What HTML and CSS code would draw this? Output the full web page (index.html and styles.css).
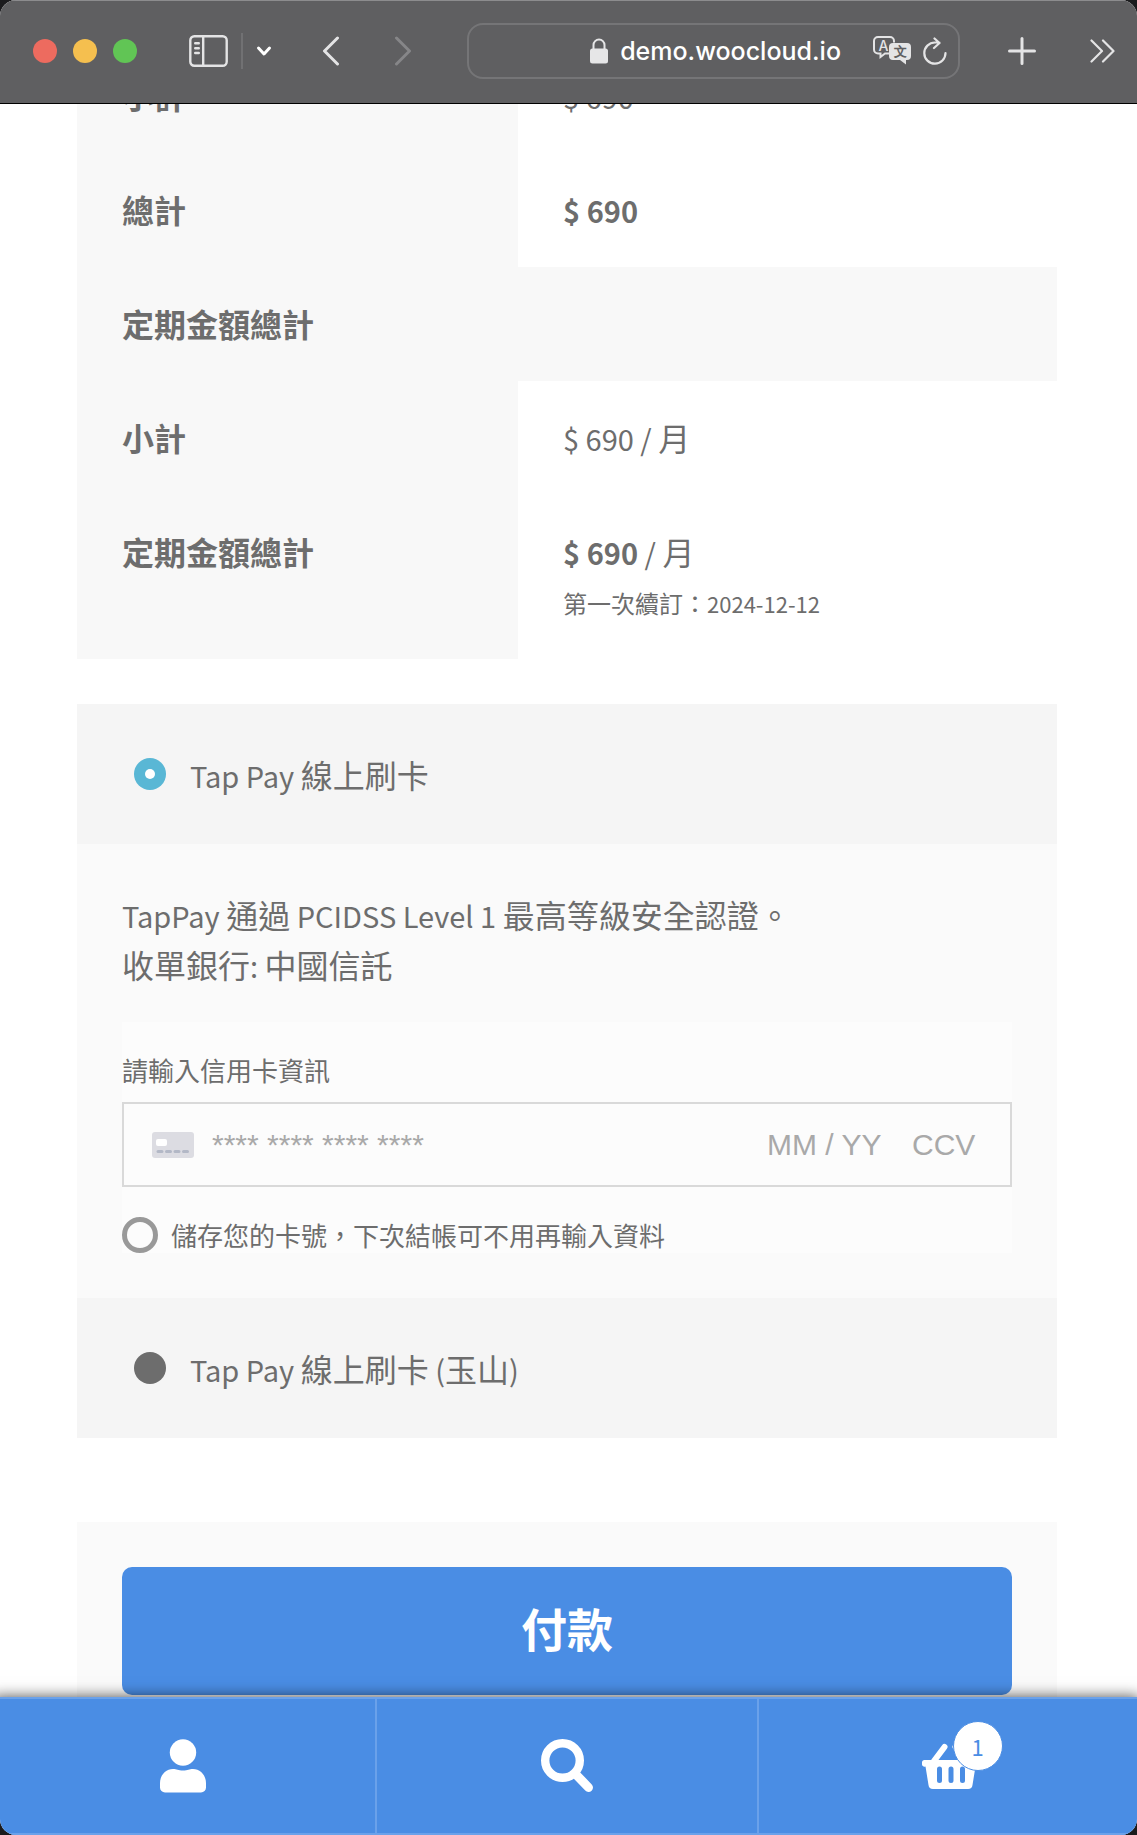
FILE: index.html
```html
<!DOCTYPE html>
<html lang="zh-Hant">
<head>
<meta charset="utf-8">
<meta name="viewport" content="width=device-width, initial-scale=1">
<title>結帳</title>
<link rel="stylesheet" href="styles.css">
</head>
<body>
<div class="window">
  <header class="toolbar">
    <div class="lights">
      <span class="light light-close"></span>
      <span class="light light-min"></span>
      <span class="light light-max"></span>
    </div>
    <div class="sidebar-tools">
      <button class="tool" type="button" aria-label="側邊欄">
        <svg width="39" height="32" viewBox="0 0 39 32" fill="none" stroke="#e4e4e5" stroke-width="2.4" stroke-linecap="round"><rect x="1.3" y="1.3" width="36.4" height="29.4" rx="4"/><path d="M14.2 1.5v29M6.2 8.3h3.6M6.2 13.2h3.6M6.2 18h3.6"/></svg>
      </button>
      <span class="divider"></span>
      <button class="tool" type="button" aria-label="標籤頁群組">
        <svg width="16" height="12" viewBox="0 0 16 12" fill="none" stroke="#fff" stroke-width="3" stroke-linecap="round" stroke-linejoin="round"><path d="M2.5 3l5.5 6 5.500-6"/></svg>
      </button>
    </div>
    <div class="history-tools">
      <button class="tool" type="button" aria-label="上一頁">
        <svg width="18" height="30" viewBox="0 0 18 30" fill="none" stroke="#e4e4e5" stroke-width="3" stroke-linecap="round" stroke-linejoin="round"><path d="M15.500 2L2.500 15l13 13"/></svg>
      </button>
      <button class="tool" type="button" aria-label="下一頁">
        <svg width="18" height="30" viewBox="0 0 18 30" fill="none" stroke="#868688" stroke-width="3" stroke-linecap="round" stroke-linejoin="round"><path d="M2.500 2l13 13-13 13"/></svg>
      </button>
    </div>
    <div class="address">
      <span class="site">
        <svg width="18" height="26" viewBox="0 0 18 26"><path d="M3.500 12V7a5.500 5.500 0 0 1 11 0v5" fill="none" stroke="#e6e6e7" stroke-width="2"/><rect x="0" y="10.500" width="18" height="15" rx="2.500" fill="#e6e6e7"/></svg>
        <span>demo.woocloud.io</span>
      </span>
      <span class="address-tools">
        <button class="tool" type="button" aria-label="翻譯">
          <svg width="38" height="29" viewBox="0 0 38 29"><path d="M16 17.500h-4L7.500 21v-3.500H5A4 4 0 0 1 1 13.500V5A4 4 0 0 1 5 1h12a4 4 0 0 1 4 4v1.500" fill="none" stroke="#e4e4e5" stroke-width="2"/><path d="M20 7h14a4 4 0 0 1 4 4v9a4 4 0 0 1-4 4h-1v4.500L27 24h-7a4 4 0 0 1-4-4v-9a4 4 0 0 1 4-4z" fill="#e4e4e5"/><text class="glyph-a" x="10.500" y="14.500">A</text><text class="glyph-wen" x="27" y="20">文</text></svg>
        </button>
        <button class="tool" type="button" aria-label="重新載入">
          <svg width="24" height="28" viewBox="0 0 24 28" fill="none" stroke="#e4e4e5" stroke-width="2.200" stroke-linecap="round" stroke-linejoin="round"><path d="M22.500 16a10.600 10.600 0 1 1-10.600-10.500h4.500M11.500 1.500l5 4.500-5.500 5"/></svg>
        </button>
      </span>
    </div>
    <div class="end-tools">
      <button class="tool" type="button" aria-label="新增標籤頁">
        <svg width="28" height="28" viewBox="0 0 28 28" fill="none" stroke="#e4e4e5" stroke-width="3" stroke-linecap="round"><path d="M14 1.500v25M1.500 14h25"/></svg>
      </button>
      <button class="tool" type="button" aria-label="更多">
        <svg width="25" height="24" viewBox="0 0 25 24" fill="none" stroke="#e4e4e5" stroke-width="2.200" stroke-linecap="round" stroke-linejoin="round"><path d="M1.500 1.500L12 12 1.500 22.500M13 1.500L23.500 12 13 22.500"/></svg>
      </button>
    </div>
  </header>

  <main class="page">
    <table class="totals">
      <tbody>
        <tr><th scope="row">小計</th><td><span class="latin">$ 690</span></td></tr>
        <tr><th scope="row">總計</th><td><strong class="latin">$ 690</strong></td></tr>
        <tr><th scope="row" colspan="2">定期金額總計</th></tr>
        <tr><th scope="row">小計</th><td><span class="latin">$ 690 / </span>月</td></tr>
        <tr><th scope="row">定期金額總計</th><td><strong class="latin">$ 690</strong><span class="latin"> / </span>月<small class="renewal">第一次續訂：<span class="latin-small">2024-12-12</span></small></td></tr>
      </tbody>
    </table>

    <form class="checkout">
      <div class="methods">
        <label class="method"><input class="method-radio" type="radio" name="pay" checked><span><span class="latin">Tap Pay </span>線上刷卡</span></label>
        <div class="method-box">
          <p class="method-note"><span class="latin">TapPay </span>通過<span class="latin"> PCIDSS Level 1 </span>最高等級安全認證。<br>收單銀行<span class="latin">: </span>中國信託</p>
          <div class="card-form">
            <label class="card-label" for="card-number">請輸入信用卡資訊</label>
            <div class="card-field">
              <svg class="card-icon" width="42" height="26" viewBox="0 0 42 26"><rect width="42" height="26" rx="3" fill="#dcdce2"/><rect x="4" y="7" width="11" height="7" rx="2" fill="#fff"/><path d="M6 19.500h4M14.500 19.500h4M23 19.500h4M31.500 19.500h4" stroke="#b3b8c6" stroke-width="3" stroke-linecap="round"/></svg>
              <input class="card-input card-number" id="card-number" type="text" placeholder="**** **** **** ****">
              <input class="card-input card-expiry" type="text" placeholder="MM / YY" aria-label="有效期限">
              <input class="card-input card-ccv" type="text" placeholder="CCV" aria-label="安全碼">
            </div>
            <label class="save-card"><input class="save-check" type="checkbox"><span>儲存您的卡號，下次結帳可不用再輸入資料</span></label>
          </div>
        </div>
        <label class="method"><input class="method-radio" type="radio" name="pay"><span><span class="latin">Tap Pay </span>線上刷卡<span class="latin"> (</span>玉山<span class="latin">)</span></span></label>
      </div>
      <div class="place-order">
        <button class="pay-button" type="submit">付款</button>
      </div>
    </form>
  </main>

  <nav class="handheld">
    <ul class="handheld-list">
      <li><a class="handheld-link" href="#account" aria-label="我的帳號">
        <svg width="46" height="54" viewBox="0 0 46 54" fill="#fff"><circle cx="23" cy="13.500" r="13.200"/><path d="M13 30c4 0 5 1.500 10 1.500S29 30 33 30c7 0 13 6 13 14v4.500a5 5 0 0 1-5 5H5a5 5 0 0 1-5-5V44c0-8 6-14 13-14z"/></svg>
      </a></li>
      <li><a class="handheld-link" href="#search" aria-label="搜尋">
        <svg width="52" height="54" viewBox="0 0 52 54" fill="none" stroke="#fff"><circle cx="21.500" cy="21.500" r="17.300" stroke-width="8.400"/><path d="M35 35.500L47.500 48.500" stroke-width="9" stroke-linecap="round"/></svg>
      </a></li>
      <li><a class="handheld-link" href="#cart" aria-label="購物車">
        <span class="cart">
          <svg width="56" height="54" viewBox="0 0 56 54"><path d="M12 22L22.500 8" stroke="#fff" stroke-width="6" stroke-linecap="round"/><path d="M44 22L33.500 8" stroke="#fff" stroke-width="6" stroke-linecap="round"/><path d="M2.500 21h51a2.500 2.500 0 0 1 2.500 2.500v1.500a2.500 2.500 0 0 1-2.500 2.500L50.500 46a4.500 4.500 0 0 1-4.500 4H11a4.500 4.500 0 0 1-4.500-4L3.500 27.500A2.500 2.500 0 0 1 0 25v-1.500A2.500 2.500 0 0 1 2.500 21z" fill="#fff"/><path d="M17.500 30v11.500M29 30v11.500M40.500 30v11.500" stroke="#4a8de4" stroke-width="5" stroke-linecap="round"/></svg>
          <span class="count">1</span>
        </span>
      </a></li>
    </ul>
  </nav>
</div>
</body>
</html>
```

FILE: styles.css
```css
* {
  box-sizing: border-box;
}

body {
  margin: 0;
  background: #1b1b1d;
  color: #6d6d6d;
  font-family: "Noto Sans CJK TC", sans-serif;
  font-size: 32px;
  line-height: 50px;
}

.window {
  display: flex;
  flex-direction: column;
  min-height: 100vh;
  overflow: hidden;
  border-radius: 16px;
  background: #fff;
}

.latin {
  font-size: 29px;
  line-height: 1;
  white-space: pre-wrap;
}

.latin-small {
  font-size: 22px;
  line-height: 1;
}

/* Browser toolbar */

.toolbar {
  position: relative;
  z-index: 1;
  display: flex;
  align-items: center;
  height: 104px;
  padding: 0 22px 2px 33px;
  border-bottom: 1px solid #000;
  background: #5f5f61;
  box-shadow: inset 0 1px #8c8c8e;
}

.tool {
  display: flex;
  padding: 0;
  border: 0;
  background: none;
}

.lights {
  display: flex;
  gap: 16px;
}

.light {
  width: 24px;
  height: 24px;
  border-radius: 50%;
}

.light-close {
  background: #ed6b5f;
}

.light-min {
  background: #f5bf4f;
}

.light-max {
  background: #61c555;
}

.sidebar-tools {
  display: flex;
  align-items: center;
  gap: 13px;
  margin-left: 52px;
}

.divider {
  width: 2px;
  height: 36px;
  background: #717173;
}

.history-tools {
  display: flex;
  gap: 54px;
  margin-left: 50px;
}

.address {
  display: flex;
  flex: 1;
  align-items: center;
  justify-content: flex-end;
  height: 56px;
  margin-left: 55px;
  padding-right: 11px;
  border: 2px solid #757577;
  border-radius: 16px;
}

.site {
  display: flex;
  align-items: center;
  gap: 12px;
  margin-right: 32px;
  color: #fff;
  font-family: Inter, sans-serif;
  font-size: 25px;
  font-weight: 500;
}

.address-tools {
  display: flex;
  align-items: center;
  gap: 12px;
}

.glyph-a,
.glyph-wen {
  font-weight: 500;
  text-anchor: middle;
}

.glyph-a {
  fill: #e4e4e5;
  font-family: Inter, sans-serif;
  font-size: 14px;
}

.glyph-wen {
  fill: #5f5f61;
  font-size: 13px;
  font-weight: 700;
}

.end-tools {
  display: flex;
  align-items: center;
  gap: 54px;
  margin-left: 48px;
}

/* Checkout page, scrolled partly under the toolbar */

.page {
  flex: 1;
  margin-top: -65px;
  padding: 0 80px 0 77px;
}

.totals {
  width: 100%;
  border-collapse: collapse;
  table-layout: fixed;
  line-height: 53px;
}

.totals th,
.totals td {
  padding: 30px 45px 31px;
  text-align: left;
  vertical-align: top;
}

.totals th {
  width: 45%;
  background: #f8f8f8;
  font-weight: 700;
}

.renewal {
  display: block;
  font-size: 24px;
  line-height: 50px;
}

.methods {
  margin-top: 45px;
}

.method {
  display: flex;
  align-items: center;
  gap: 24px;
  padding: 45px 57px;
  background: #f5f5f5;
}

.method-radio {
  display: grid;
  place-items: center;
  width: 32px;
  height: 32px;
  margin: 0;
  border-radius: 50%;
  background: #6d6d6d;
  appearance: none;
}

.method-radio:checked {
  background: #59b7d5;
}

.method-radio:checked::before {
  width: 10px;
  height: 10px;
  border-radius: 50%;
  background: #fff;
  content: "";
}

.method-box {
  padding: 45px;
  background: #fafafa;
}

.method-note {
  margin: 0 0 33px;
}

.card-form {
  padding-top: 28px;
  background: #fcfcfc;
  font-size: 26px;
}

.card-label {
  display: block;
  margin-bottom: 12px;
  line-height: 40px;
}

.card-field {
  display: flex;
  align-items: center;
  height: 85px;
  padding: 0 28px;
  border: 2px solid #d9d9d9;
}

.card-icon {
  margin-right: 18px;
}

.card-input {
  min-width: 0;
  padding: 0;
  border: 0;
  background: none;
  color: #6d6d6d;
  font-family: "Liberation Sans", sans-serif;
  font-size: 30px;
}

.card-input::placeholder {
  color: #a9a9a9;
  opacity: 1;
}

.card-number {
  flex: 1;
}

.card-expiry {
  width: 145px;
}

.card-ccv {
  width: 70px;
}

.save-card {
  display: flex;
  align-items: center;
  gap: 13px;
  margin-top: 30px;
  line-height: 36px;
}

.save-check {
  width: 36px;
  height: 36px;
  margin: 0;
  border: 5px solid #999;
  border-radius: 50%;
  appearance: none;
}

.place-order {
  margin-top: 84px;
  padding: 45px 45px 2px;
  background: #fafafa;
}

.pay-button {
  width: 100%;
  padding: 30px 34px 38px;
  border: 0;
  border-radius: 10px;
  background: #4a8de4;
  color: #fff;
  font-family: inherit;
  font-size: 46px;
  font-weight: 700;
  line-height: 60px;
}

/* Bottom navigation */

.handheld {
  position: relative;
  margin: 0 -3px 0 -8px;
  border-top: 2px solid #6aa1ea;
  border-bottom: 2px solid #6aa1ea;
  background: #4a8de4;
  box-shadow: 0 0 14px rgba(0, 0, 0, 0.7);
}

.handheld-list {
  display: grid;
  grid-template-columns: repeat(3, 1fr);
  margin: 0;
  padding: 0;
  list-style: none;
}

.handheld-list li + li {
  border-left: 2px solid #6aa1ea;
}

.handheld-link {
  display: flex;
  justify-content: center;
  padding: 40px 0;
}

.cart {
  position: relative;
  display: flex;
}

.count {
  position: absolute;
  top: -18px;
  left: 31px;
  width: 50px;
  height: 50px;
  border: 1px solid #4a8de4;
  border-radius: 50%;
  background: #fff;
  color: #4a8de4;
  font-size: 22px;
  line-height: 48px;
  text-align: center;
}
```
